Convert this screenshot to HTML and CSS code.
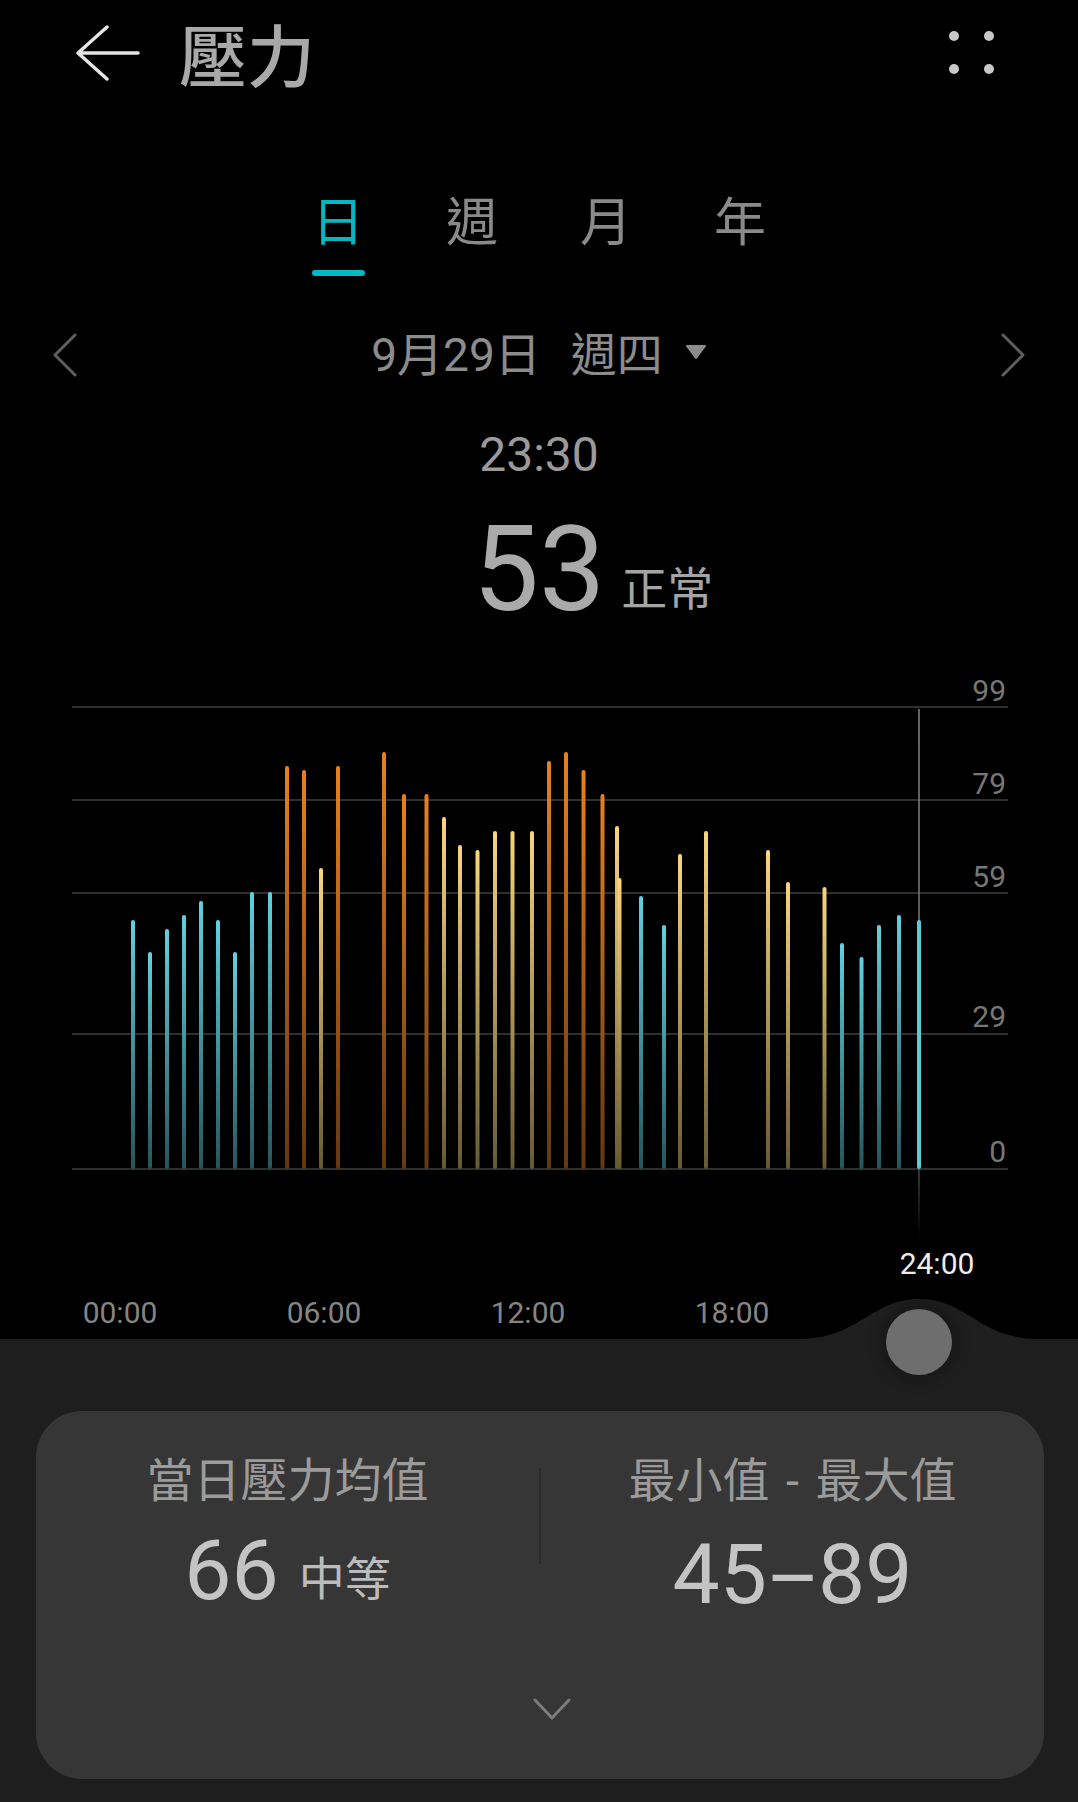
FILE: index.html
```html
<!DOCTYPE html>
<html lang="zh-Hant">

<head>
    <meta charset="UTF-8">
    <meta name="viewport" content="width=device-width, initial-scale=1.0">
    <title>壓力</title>
    <link rel="stylesheet" href="styles.css">
</head>

<body>
    <header class="topbar">
        <svg class="back" viewBox="0 0 64 60">
            <path d="M31 4 L2 30 L31 56 M2 30 H62" />
        </svg>
        <h1 class="title">壓力</h1>
        <svg class="more" viewBox="0 0 56 44">
            <circle cx="10" cy="5" r="5" />
            <circle cx="45" cy="5" r="5" />
            <circle cx="10" cy="38" r="5" />
            <circle cx="45" cy="38" r="5" />
        </svg>
    </header>

    <nav class="tabs">
        <span class="tab active">日</span>
        <span class="tab">週</span>
        <span class="tab">月</span>
        <span class="tab">年</span>
    </nav>

    <div class="date-row">
        <svg class="chev" viewBox="0 0 26 44"><path d="M23 2 L3 22 L23 42" /></svg>
        <div class="date">
            <span>9月29日</span>
            <span class="weekday">週四</span>
            <svg class="caret" viewBox="0 0 22 14"><path d="M2 1 H20 L11 13 Z" /></svg>
        </div>
        <svg class="chev" viewBox="0 0 26 44"><path d="M3 2 L23 22 L3 42" /></svg>
    </div>

    <div class="time">23:30</div>

    <div class="reading">
        <span class="reading-value">53</span>
        <span class="reading-unit">正常</span>
    </div>

    <section class="chart">
        <svg class="chart-svg" viewBox="0 0 1078 690">
            <defs>
                <linearGradient id="g-cyan" x1="0" y1="0" x2="0" y2="1">
                    <stop offset="0" stop-color="#5fd2de" />
                    <stop offset="1" stop-color="#24555b" />
                </linearGradient>
                <linearGradient id="g-orange" x1="0" y1="0" x2="0" y2="1">
                    <stop offset="0" stop-color="#ea801c" />
                    <stop offset="1" stop-color="#633710" />
                </linearGradient>
                <linearGradient id="g-yellow" x1="0" y1="0" x2="0" y2="1">
                    <stop offset="0" stop-color="#f8d67c" />
                    <stop offset="1" stop-color="#665933" />
                </linearGradient>
                <linearGradient id="g-cursor" x1="0" y1="0" x2="0" y2="1">
                    <stop offset="0" stop-color="#7c7c7c" />
                    <stop offset="0.8" stop-color="#6a6a6a" />
                    <stop offset="1" stop-color="#6a6a6a" stop-opacity="0" />
                </linearGradient>
            </defs>

            <g class="grid">
                <line x1="72" y1="58" x2="1008" y2="58" />
                <line x1="72" y1="151" x2="1008" y2="151" />
                <line x1="72" y1="244" x2="1008" y2="244" />
                <line x1="72" y1="385" x2="1008" y2="385" />
                <line x1="72" y1="520" x2="1008" y2="520" />
            </g>
            <g class="y-labels">
                <text x="1006" y="52">99</text>
                <text x="1006" y="145">79</text>
                <text x="1006" y="238">59</text>
                <text x="1006" y="378">29</text>
                <text x="1006" y="513">0</text>
            </g>

            <rect class="cursor" x="918.2" y="60" width="1.6" height="530" />

            <g class="bars">
                <rect class="bar-c" x="131" y="271" width="4" height="249" rx="2" />
                <rect class="bar-c" x="148" y="303" width="4" height="217" rx="2" />
                <rect class="bar-c" x="165" y="280" width="4" height="240" rx="2" />
                <rect class="bar-c" x="182" y="266" width="4" height="254" rx="2" />
                <rect class="bar-c" x="199" y="252" width="4" height="268" rx="2" />
                <rect class="bar-c" x="216" y="271" width="4" height="249" rx="2" />
                <rect class="bar-c" x="233" y="303" width="4" height="217" rx="2" />
                <rect class="bar-c" x="250" y="243" width="4" height="277" rx="2" />
                <rect class="bar-c" x="268" y="243" width="4" height="277" rx="2" />
                <rect class="bar-o" x="285" y="117" width="4" height="403" rx="2" />
                <rect class="bar-o" x="302" y="121" width="4" height="399" rx="2" />
                <rect class="bar-y" x="319" y="219" width="4" height="301" rx="2" />
                <rect class="bar-o" x="336" y="117" width="4" height="403" rx="2" />
                <rect class="bar-o" x="382" y="103" width="4" height="417" rx="2" />
                <rect class="bar-o" x="402" y="145" width="4" height="375" rx="2" />
                <rect class="bar-o" x="424.5" y="145" width="4" height="375" rx="2" />
                <rect class="bar-y" x="442" y="168" width="4" height="352" rx="2" />
                <rect class="bar-y" x="458" y="196" width="4" height="324" rx="2" />
                <rect class="bar-y" x="475.5" y="201" width="4" height="319" rx="2" />
                <rect class="bar-y" x="493" y="182" width="4" height="338" rx="2" />
                <rect class="bar-y" x="510.5" y="182" width="4" height="338" rx="2" />
                <rect class="bar-y" x="530" y="182" width="4" height="338" rx="2" />
                <rect class="bar-o" x="547" y="112" width="4" height="408" rx="2" />
                <rect class="bar-o" x="564" y="103" width="4" height="417" rx="2" />
                <rect class="bar-o" x="581.5" y="121" width="4" height="399" rx="2" />
                <rect class="bar-o" x="600.5" y="145" width="4" height="375" rx="2" />
                <rect class="bar-y" x="615" y="177" width="4" height="343" rx="2" />
                <rect class="bar-y" x="617.5" y="229" width="4" height="291" rx="2" />
                <rect class="bar-c" x="639" y="247" width="4" height="273" rx="2" />
                <rect class="bar-c" x="662" y="276" width="4" height="244" rx="2" />
                <rect class="bar-y" x="678" y="205" width="4" height="315" rx="2" />
                <rect class="bar-y" x="704" y="182" width="4" height="338" rx="2" />
                <rect class="bar-y" x="766" y="201" width="4" height="319" rx="2" />
                <rect class="bar-y" x="786" y="233" width="4" height="287" rx="2" />
                <rect class="bar-y" x="822.5" y="238" width="4" height="282" rx="2" />
                <rect class="bar-c" x="840" y="294" width="4" height="226" rx="2" />
                <rect class="bar-c" x="859.5" y="308" width="4" height="212" rx="2" />
                <rect class="bar-c" x="877" y="276" width="4" height="244" rx="2" />
                <rect class="bar-c" x="897" y="266" width="4" height="254" rx="2" />
                <rect class="bar-sel" x="917" y="271" width="4" height="249" rx="2" />
            </g>

            <text class="cursor-label" x="937" y="625">24:00</text>
            <g class="x-labels">
                <text x="120" y="674">00:00</text>
                <text x="324" y="674">06:00</text>
                <text x="528" y="674">12:00</text>
                <text x="732" y="674">18:00</text>
            </g>

            <path class="bump" d="M798 690 C860 690 870 650 919 650 C968 650 978 690 1040 690 Z" />
        </svg>
        <div class="knob"></div>
    </section>

    <section class="panel">
        <div class="card">
            <div class="stats">
                <div class="stat">
                    <span class="stat-label">當日壓力均值</span>
                    <div class="stat-value">
                        <span>66</span>
                        <span class="stat-unit">中等</span>
                    </div>
                </div>
                <div class="divider"></div>
                <div class="stat">
                    <span class="stat-label">最小值 <span class="sep">-</span> 最大值</span>
                    <div class="stat-value">
                        <span>45<span class="dash">-</span>89</span>
                    </div>
                </div>
            </div>
            <svg class="expand" viewBox="0 0 40 24"><path d="M3 3 L20 21 L37 3" /></svg>
        </div>
    </section>
</body>

</html>
```

FILE: styles.css
```css
* {
    box-sizing: border-box;
}

body {
    margin: 0;
    width: 1078px;
    min-height: 1802px;
    background: #000;
    font-family: Roboto, 'Noto Sans CJK TC', sans-serif;
}

.topbar {
    display: flex;
    align-items: center;
    height: 106px;
    padding: 0 78px 0 76px;

    .back {
        width: 64px;
        height: 60px;
        fill: none;
        stroke: #e4e4e4;
        stroke-width: 3.5;
        stroke-linecap: round;
        stroke-linejoin: round;
    }

    .more {
        margin-left: auto;
        width: 56px;
        height: 44px;
        fill: #c8c8c8;
    }
}

.title {
    margin: 0 0 0 39px;
    font: 500 68px/1 'Noto Sans CJK TC', sans-serif;
    color: #a9a9a9;
}

.tabs {
    display: flex;
    justify-content: center;
    padding-top: 83px;
}

.tab {
    width: 134px;
    display: flex;
    flex-direction: column;
    align-items: center;
    font: 52px/60px 'Noto Sans CJK TC', sans-serif;
    color: #8a8a8a;

    &::after {
        content: "";
        width: 53px;
        height: 6px;
        margin-top: 21px;
        border-radius: 3px;
    }

    &.active {
        color: #00b7c2;
    }

    &.active::after {
        background: #00b7c2;
    }
}

.date-row {
    display: flex;
    align-items: center;
    justify-content: space-between;
    height: 56px;
    margin-top: 51px;
    padding: 0 52px;

    .chev {
        width: 26px;
        height: 44px;
        fill: none;
        stroke: #5e5e5e;
        stroke-width: 3;
        stroke-linecap: round;
        stroke-linejoin: round;
    }
}

.date {
    display: flex;
    align-items: center;
    font-size: 46px;
    line-height: 56px;
    color: #8c8c8c;

    .weekday {
        margin-left: 30px;
    }

    .caret {
        width: 22px;
        height: 14px;
        margin: 0 0 6px 22px;
        fill: #8c8c8c;
        stroke: #8c8c8c;
        stroke-width: 2;
        stroke-linejoin: round;
    }
}

.time {
    margin-top: 44px;
    text-align: center;
    font-size: 48px;
    line-height: 56px;
    color: #9a9a9a;
}

.reading {
    display: grid;
    grid-template-columns: 1fr auto 1fr;
    align-items: end;
    margin-top: 28px;
    color: #aaa;

    .reading-value {
        grid-column: 2;
        font-size: 118px;
        line-height: 118px;
    }

    .reading-unit {
        margin: 0 0 21px 16px;
        font: 46px/1 'Noto Sans CJK TC', sans-serif;
        color: #a4a4a4;
    }
}

.chart {
    position: relative;
    height: 690px;
    margin-top: 20px;

    .chart-svg {
        display: block;
        width: 1078px;
        height: 690px;
    }

    .grid line {
        stroke: #2f2f2f;
        stroke-width: 2;
    }

    .y-labels text {
        font: 30px Roboto, sans-serif;
        fill: #777;
        text-anchor: end;
    }

    .x-labels text {
        font: 30px Roboto, sans-serif;
        fill: #858585;
        text-anchor: middle;
    }

    .cursor-label {
        font: 30px Roboto, sans-serif;
        fill: #ececec;
        text-anchor: middle;
    }

    .cursor {
        fill: url(#g-cursor);
    }

    .bar-c {
        fill: url(#g-cyan);
    }

    .bar-o {
        fill: url(#g-orange);
    }

    .bar-y {
        fill: url(#g-yellow);
    }

    .bar-sel {
        fill: #5ccad4;
    }

    .bump {
        fill: #1e1e1e;
    }
}

.knob {
    position: absolute;
    z-index: 2;
    left: 886px;
    top: 660px;
    width: 66px;
    height: 66px;
    border-radius: 50%;
    background: #6e6e6e;
    box-shadow: 0 0 14px 6px rgba(0, 0, 0, 0.22);
}

.panel {
    height: 464px;
    padding: 72px 34px 24px 36px;
    background: #1e1e1e;
}

.card {
    display: flex;
    flex-direction: column;
    height: 368px;
    padding-top: 38px;
    border-radius: 46px;
    background: #363636;

    .expand {
        align-self: center;
        width: 40px;
        height: 24px;
        margin: 80px 0 0 24px;
        fill: none;
        stroke: #7c7c7c;
        stroke-width: 3;
        stroke-linecap: round;
        stroke-linejoin: round;
    }
}

.stats {
    display: grid;
    grid-template-columns: 1fr 2px 1fr;
}

.stat {
    display: flex;
    flex-direction: column;
    align-items: center;
}

.stat-label {
    font: 47px/56px 'Noto Sans CJK TC', sans-serif;
    color: #9b9b9b;

    .sep {
        margin: 0 6px;
        font-family: Roboto, sans-serif;
    }
}

.stat-value {
    display: flex;
    align-items: flex-end;
    gap: 20px;
    margin-top: 24px;
    font-size: 84px;
    line-height: 84px;
    color: #c4c4c4;

    .dash {
        display: inline-block;
        margin: 0 14px;
        transform: scaleX(2);
    }

    .stat-unit {
        margin-bottom: 15px;
        font: 46px/1 'Noto Sans CJK TC', sans-serif;
        color: #bcbcbc;
    }
}

.divider {
    width: 2px;
    height: 96px;
    margin-top: 19px;
    background: #2a2a2a;
}
```
